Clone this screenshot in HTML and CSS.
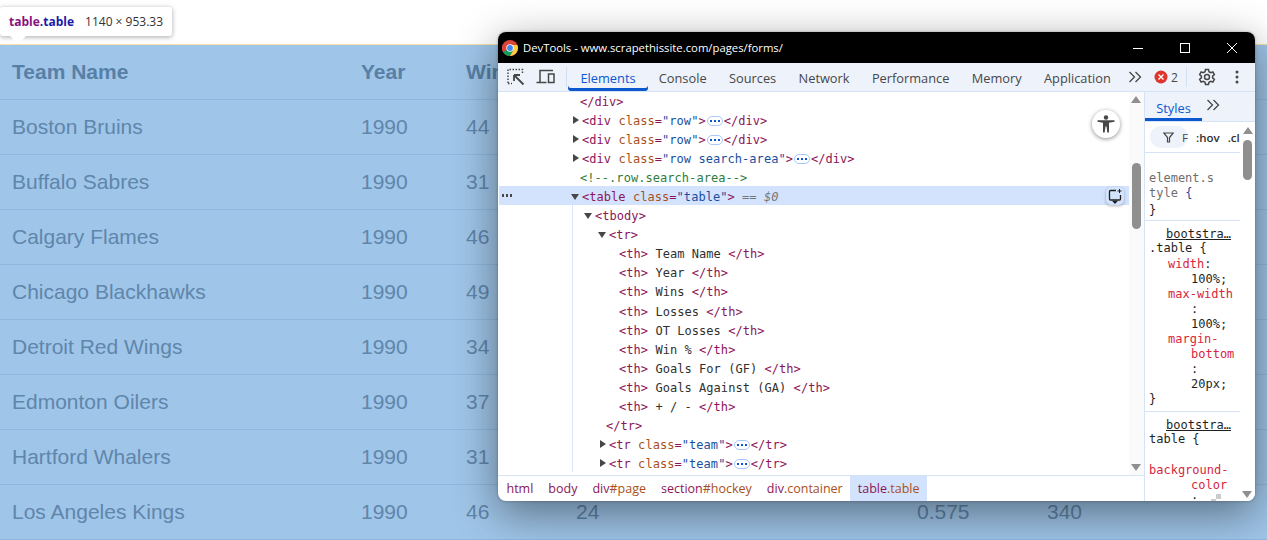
FILE: index.html
```html
<!DOCTYPE html>
<html lang="en">
<head>
    <meta charset="UTF-8">
    <title>DevTools - www.scrapethissite.com/pages/forms/</title>
    <link rel="stylesheet" href="styles.css">
</head>
<body>
    <div class="page-top"></div>
    <table class="teams">
        <colgroup>
            <col class="c-name"><col class="c-year"><col class="c-wins"><col class="c-losses"><col class="c-ot"><col class="c-pct"><col class="c-gf">
        </colgroup>
        <tr><th>Team Name</th><th>Year</th><th>Wins</th><th></th><th></th><th></th><th></th></tr>
        <tr><td>Boston Bruins</td><td>1990</td><td>44</td><td></td><td></td><td></td><td></td></tr>
        <tr><td>Buffalo Sabres</td><td>1990</td><td>31</td><td></td><td></td><td></td><td></td></tr>
        <tr><td>Calgary Flames</td><td>1990</td><td>46</td><td></td><td></td><td></td><td></td></tr>
        <tr><td>Chicago Blackhawks</td><td>1990</td><td>49</td><td></td><td></td><td></td><td></td></tr>
        <tr><td>Detroit Red Wings</td><td>1990</td><td>34</td><td></td><td></td><td></td><td></td></tr>
        <tr><td>Edmonton Oilers</td><td>1990</td><td>37</td><td></td><td></td><td></td><td></td></tr>
        <tr><td>Hartford Whalers</td><td>1990</td><td>31</td><td></td><td></td><td></td><td></td></tr>
        <tr><td>Los Angeles Kings</td><td>1990</td><td>46</td><td>24</td><td></td><td>0.575</td><td>340</td></tr>
    </table>

    <div class="tip">
        <span class="tip-name"><span class="tip-tag">table</span>.table</span>
        <span class="tip-size">1140 × 953.33</span>
    </div>

    <div class="devtools">
        <div class="titlebar">
            <svg class="chrome-logo" width="16" height="16" viewBox="0 0 16 16">
                <circle cx="8" cy="8" r="8" fill="#db4437"/>
                <path d="M8 8 L1.07 12 A8 8 0 0 1 1.07 4 L4 4 Z" fill="#db4437"/>
                <path d="M8 8 L1.07 12 A8 8 0 0 0 8 16 L11.5 10 Z" fill="#0f9d58"/>
                <path d="M8 8 L11.5 10 L8 16 A8 8 0 0 0 15.4 5 L8 5 Z" fill="#ffcd40"/>
                <circle cx="8" cy="8" r="3.7" fill="#fff"/>
                <circle cx="8" cy="8" r="2.9" fill="#4285f4"/>
            </svg>
            <span class="title-text">DevTools - www.scrapethissite.com/pages/forms/</span>
            <div class="win-buttons">
                <svg width="12" height="12" viewBox="0 0 12 12"><path d="M1 6.5h10" stroke="#fff"/></svg>
                <svg width="12" height="12" viewBox="0 0 12 12"><rect x="1.5" y="1.5" width="9" height="9" fill="none" stroke="#fff"/></svg>
                <svg width="12" height="12" viewBox="0 0 12 12"><path d="M1 1l10 10M11 1L1 11" stroke="#fff"/></svg>
            </div>
        </div>

        <div class="toolbar">
            <svg class="tool-inspect" width="18" height="18" viewBox="0 0 18 18" fill="none" stroke="#474747">
                <path d="M1 15V1.500H15.500V5M1 15.500H5" stroke-width="1.500" stroke-dasharray="1.500 1.500"/>
                <path d="M7 7L16.500 16.500M7 7h6M7 7v6" stroke-width="1.800"/>
            </svg>
            <svg class="tool-device" width="20" height="16" viewBox="0 0 20 16" fill="none" stroke="#474747" stroke-width="1.500">
                <path d="M4 13V1.500H17M0.500 13.500h10"/>
                <rect x="12.500" y="5" width="5.500" height="8.500"/>
            </svg>
            <span class="tool-sep"></span>
            <div class="tabs">
                <span class="tab tab-active">Elements</span>
                <span class="tab">Console</span>
                <span class="tab">Sources</span>
                <span class="tab">Network</span>
                <span class="tab">Performance</span>
                <span class="tab">Memory</span>
                <span class="tab">Application</span>
            </div>
            <svg class="more-tabs" width="14" height="12" viewBox="0 0 14 12" fill="none" stroke="#474747" stroke-width="1.3"><path d="M1.500 1l5 5-5 5M7.500 1l5 5-5 5"/></svg>
            <svg class="err-icon" width="14" height="14" viewBox="0 0 14 14"><circle cx="7" cy="7" r="6.500" fill="#dc362e"/><path d="M4.500 4.500l5 5M9.500 4.500l-5 5" stroke="#fff" stroke-width="1.300"/></svg>
            <span class="err-count">2</span>
            <span class="tool-sep sep-right"></span>
            <svg class="gear" width="18" height="18" viewBox="0 0 24 24" fill="none" stroke="#474747" stroke-width="2">
                <path d="M10 2h4l.6 3 2.300 1.300 2.900-1 2 3.500-2.300 2v2.400l2.300 2-2 3.500-2.900-1-2.300 1.300-.6 3h-4l-.6-3-2.300-1.300-2.900 1-2-3.500 2.300-2v-2.400l-2.300-2 2-3.500 2.900 1L9.400 5z"/>
                <circle cx="12" cy="12" r="3.300"/>
            </svg>
            <svg class="kebab" width="4" height="14" viewBox="0 0 4 14" fill="#474747"><circle cx="2" cy="2" r="1.500"/><circle cx="2" cy="7" r="1.500"/><circle cx="2" cy="12" r="1.500"/></svg>
        </div>

        <div class="panels">
            <div class="elements">
                <div class="tree-wrap">
                    <div class="tree">
                        <div class="line d-close"><span class="tg">&lt;/div&gt;</span></div>
                        <div class="line d-0"><i class="arrow"></i><span class="tg">&lt;div</span> <span class="at">class</span><span class="tg">=</span><span class="vl">"row"</span><span class="tg">&gt;</span><span class="dots"></span><span class="tg">&lt;/div&gt;</span></div>
                        <div class="line d-0"><i class="arrow"></i><span class="tg">&lt;div</span> <span class="at">class</span><span class="tg">=</span><span class="vl">"row"</span><span class="tg">&gt;</span><span class="dots"></span><span class="tg">&lt;/div&gt;</span></div>
                        <div class="line d-0"><i class="arrow"></i><span class="tg">&lt;div</span> <span class="at">class</span><span class="tg">=</span><span class="vl">"row search-area"</span><span class="tg">&gt;</span><span class="dots"></span><span class="tg">&lt;/div&gt;</span></div>
                        <div class="line d-close cm">&lt;!--.row.search-area--&gt;</div>
                        <div class="line d-0 selected"><span class="gutter-dots"></span><i class="arrow open"></i><span class="tg">&lt;table</span> <span class="at">class</span><span class="tg">=</span><span class="vl">"table"</span><span class="tg">&gt;</span> <em class="eq">== $0</em></div>
                        <div class="children">
                            <div class="line d-1"><i class="arrow open"></i><span class="tg">&lt;tbody&gt;</span></div>
                            <div class="line d-2"><i class="arrow open"></i><span class="tg">&lt;tr&gt;</span></div>
                            <div class="line d-3"><span class="tg">&lt;th&gt;</span> Team Name <span class="tg">&lt;/th&gt;</span></div>
                            <div class="line d-3"><span class="tg">&lt;th&gt;</span> Year <span class="tg">&lt;/th&gt;</span></div>
                            <div class="line d-3"><span class="tg">&lt;th&gt;</span> Wins <span class="tg">&lt;/th&gt;</span></div>
                            <div class="line d-3"><span class="tg">&lt;th&gt;</span> Losses <span class="tg">&lt;/th&gt;</span></div>
                            <div class="line d-3"><span class="tg">&lt;th&gt;</span> OT Losses <span class="tg">&lt;/th&gt;</span></div>
                            <div class="line d-3"><span class="tg">&lt;th&gt;</span> Win % <span class="tg">&lt;/th&gt;</span></div>
                            <div class="line d-3"><span class="tg">&lt;th&gt;</span> Goals For (GF) <span class="tg">&lt;/th&gt;</span></div>
                            <div class="line d-3"><span class="tg">&lt;th&gt;</span> Goals Against (GA) <span class="tg">&lt;/th&gt;</span></div>
                            <div class="line d-3"><span class="tg">&lt;th&gt;</span> + / - <span class="tg">&lt;/th&gt;</span></div>
                            <div class="line d-2-close"><span class="tg">&lt;/tr&gt;</span></div>
                            <div class="line d-2"><i class="arrow"></i><span class="tg">&lt;tr</span> <span class="at">class</span><span class="tg">=</span><span class="vl">"team"</span><span class="tg">&gt;</span><span class="dots"></span><span class="tg">&lt;/tr&gt;</span></div>
                            <div class="line d-2"><i class="arrow"></i><span class="tg">&lt;tr</span> <span class="at">class</span><span class="tg">=</span><span class="vl">"team"</span><span class="tg">&gt;</span><span class="dots"></span><span class="tg">&lt;/tr&gt;</span></div>
                        </div>
                    </div>
                    <div class="scroll scroll-tree">
                        <i class="sc-up"></i>
                        <i class="sc-thumb"></i>
                        <i class="sc-down"></i>
                    </div>
                    <div class="a11y-btn">
                        <svg width="20" height="20" viewBox="0 0 20 20" fill="#474747">
                            <circle cx="10" cy="3.500" r="2.200"/>
                            <path d="M1.500 6.300h17v1.400l-5.500 1V18.500h-1.700l-.8-6h-1l-.8 6H7V8.700l-5.500-1z"/>
                        </svg>
                    </div>
                    <div class="ai-btn">
                        <svg width="16" height="16" viewBox="0 0 16 16" fill="none" stroke="#1f1f1f" stroke-width="1.300">
                            <path d="M9 2.500H3.500a1 1 0 0 0-1 1v7.500a1 1 0 0 0 1 1h9a1 1 0 0 0 1-1V7"/>
                            <path d="M6.500 13.500h3L8 15z" fill="#1f1f1f"/>
                            <path d="M12.500 1v4M10.500 3h4" stroke-width="1"/>
                        </svg>
                    </div>
                </div>
                <div class="crumbs">
                    <span class="crumb"><span class="tg">html</span></span>
                    <span class="crumb"><span class="tg">body</span></span>
                    <span class="crumb"><span class="tg">div</span><span class="at">#page</span></span>
                    <span class="crumb"><span class="tg">section</span><span class="at">#hockey</span></span>
                    <span class="crumb"><span class="tg">div</span><span class="at">.container</span></span>
                    <span class="crumb crumb-on"><span class="tg">table</span><span class="at">.table</span></span>
                </div>
            </div>

            <div class="sidebar">
                <div class="side-tabs">
                    <span class="side-tab">Styles</span>
                    <svg class="side-more" width="14" height="12" viewBox="0 0 14 12" fill="none" stroke="#474747" stroke-width="1.300"><path d="M1.500 1l5 5-5 5M7.500 1l5 5-5 5"/></svg>
                </div>
                <div class="filter-row">
                    <div class="filter-pill">
                        <svg width="11" height="11" viewBox="0 0 11 11" fill="none" stroke="#474747" stroke-width="1.200"><path d="M.8 1h9.400L6.500 5.500V10h-2V5.500z"/></svg>
                        <span>F</span>
                    </div>
                    <span class="filter-btn">:hov</span>
                    <span class="filter-btn">.cl</span>
                </div>
                <div class="rules">
                    <div class="rule rule-first">
                        <div class="sl sel-gray">element.s</div>
                        <div class="sl sel-gray">tyle <span class="brace">{</span></div>
                        <div class="sl end-first">}</div>
                    </div>
                    <div class="rule">
                        <div class="sl src"><u>bootstra…</u></div>
                        <div class="sl sel">.table {</div>
                        <div class="sl in1"><span class="prop">width</span>:</div>
                        <div class="sl in2">100%;</div>
                        <div class="sl in1"><span class="prop">max-width</span></div>
                        <div class="sl in2">:</div>
                        <div class="sl in2">100%;</div>
                        <div class="sl in1"><span class="prop">margin-</span></div>
                        <div class="sl in2"><span class="prop">bottom</span></div>
                        <div class="sl in2">:</div>
                        <div class="sl in2">20px;</div>
                        <div class="sl">}</div>
                    </div>
                    <div class="rule">
                        <div class="sl src"><u>bootstra…</u></div>
                        <div class="sl sel">table {</div>
                        <div class="sl">&nbsp;</div>
                        <div class="sl"><span class="prop">background-</span></div>
                        <div class="sl in2"><span class="prop">color</span></div>
                        <div class="sl in2">: <i class="swatch"></i></div>
                    </div>
                </div>
                <div class="scroll scroll-side">
                    <i class="sc-up"></i>
                    <i class="sc-thumb"></i>
                    <i class="sc-down"></i>
                </div>
            </div>
        </div>
    </div>
</body>
</html>
```

FILE: styles.css
```css
html, body {
    margin: 0;
    padding: 0;
    height: 540px;
    overflow: hidden;
    background: #fff;
}

body {
    position: relative;
    font-family: "Liberation Sans", Arial, sans-serif;
}

/* page underneath, with the inspect overlay colour */
.page-top {
    height: 44px;
    border-bottom: 1px solid #f6dfa8;
    background: #fff;
}

.teams {
    width: 1267px;
    table-layout: fixed;
    border-collapse: collapse;
    background: #9fc5e8;
    color: #5f86ab;
    font-size: 21px;
}

.c-name { width: 349px; }
.c-year { width: 105px; }
.c-wins { width: 110px; }
.c-losses { width: 135px; }
.c-ot { width: 206px; }
.c-pct { width: 130px; }

.teams th, .teams td {
    height: 54px;
    padding: 0 10px 0 12px;
    box-sizing: content-box;
    border-bottom: 1px solid #8fb8df;
    text-align: left;
    white-space: nowrap;
}

.teams th {
    color: #5880a6;
    font-weight: bold;
}

/* element tooltip */
.tip {
    position: absolute;
    left: 0;
    top: 7px;
    width: 172px;
    height: 29px;
    display: flex;
    align-items: center;
    gap: 11px;
    padding-left: 9px;
    box-sizing: border-box;
    background: #fff;
    border-radius: 3px;
    box-shadow: 0 1px 5px rgba(0, 0, 0, 0.35);
    font-family: "Open Sans", sans-serif;
    font-size: 12px;
}

.tip::after {
    content: "";
    position: absolute;
    left: 10px;
    top: 29px;
    border-left: 8px solid transparent;
    border-right: 8px solid transparent;
    border-top: 8px solid #fff;
}

.tip-name {
    color: #1a1aa6;
    font-weight: bold;
}

.tip-tag {
    color: #881280;
}

.tip-size {
    color: #333;
}

/* devtools window */
.devtools {
    position: absolute;
    left: 498px;
    top: 32px;
    width: 757px;
    height: 469px;
    display: flex;
    flex-direction: column;
    background: #fff;
    border-radius: 8px;
    overflow: hidden;
    box-shadow: 0 12px 44px rgba(0, 0, 0, 0.45), 0 0 3px rgba(0, 0, 0, 0.3);
    font-family: "Open Sans", sans-serif;
}

.titlebar {
    height: 31px;
    flex: none;
    display: flex;
    align-items: center;
    background: #000;
    color: #fff;
    padding-left: 4px;
}

.chrome-logo {
    margin-right: 5px;
}

.title-text {
    font-size: 11.300px;
}

.win-buttons {
    margin-left: auto;
    display: flex;
    gap: 35px;
    padding-right: 17px;
}

.toolbar {
    height: 29px;
    box-sizing: border-box;
    flex: none;
    display: flex;
    align-items: center;
    background: #edf2fb;
    border-bottom: 1px solid #d6e2f5;
}

.tool-inspect {
    margin-left: 9px;
}

.tool-device {
    margin-left: 11px;
}

.tool-sep {
    width: 1px;
    height: 20px;
    margin-left: 10px;
    background: #d3e0f2;
}

.tabs {
    display: flex;
    flex: none;
    width: 556px;
    margin-left: 1px;
    height: 28px;
}

.tab {
    padding: 0 11.200px;
    line-height: 30px;
    font-size: 12.800px;
    color: #474747;
    white-space: nowrap;
}

.tab-active {
    padding: 0 12px 0 12.500px;
    color: #0b57d0;
    box-shadow: inset 0 -3px 0 #0b57d0;
    border-radius: 0 0 3px 3px;
}

.more-tabs {
    margin-left: 4px;
}

.err-icon {
    margin-left: 12px;
}

.err-count {
    margin-left: 3px;
    font-size: 12px;
    color: #474747;
}

.sep-right {
    margin-left: 8px;
}

.gear {
    margin-left: 11px;
}

.kebab {
    margin-left: 19px;
}

.panels {
    flex: 1;
    display: flex;
    min-height: 0;
}

.elements {
    width: 646px;
    flex: none;
    display: flex;
    flex-direction: column;
}

.tree-wrap {
    flex: 1;
    position: relative;
    display: flex;
    min-height: 0;
    overflow: hidden;
}

.tree {
    flex: 1;
    margin-top: -1px;
    font-family: "DejaVu Sans Mono", monospace;
    font-size: 12px;
    letter-spacing: 0.050px;
    color: #303030;
}

.line {
    height: 19.050px;
    box-sizing: border-box;
    padding-top: 2px;
    line-height: 19px;
    white-space: pre;
}

.tg { color: #8c1558; }
.at { color: #a8501c; }
.vl { color: #1a4f9f; }
.cm { color: #2f7d3a; }

.d-close { padding-left: 82px; }
.d-0 { padding-left: 84px; }
.children {
    margin-left: 74px;
    border-left: 1px solid #dbe6f8;
}
.d-1 { padding-left: 22px; }
.d-2 { padding-left: 36px; }
.d-3 { padding-left: 46px; }
.d-2-close { padding-left: 33px; }

.selected {
    position: relative;
    background: #d3e3fd;
    margin-left: 1px;
    padding-left: 83px;
}

.eq {
    color: #767676;
}

.gutter-dots {
    position: absolute;
    left: 2px;
    top: 8px;
    width: 12px;
    height: 3px;
    background: radial-gradient(circle, #474747 1.200px, transparent 1.500px) 0 0 / 4px 3px repeat-x;
}

.arrow {
    display: inline-block;
    position: relative;
}

.arrow::before {
    content: "";
    position: absolute;
    left: -9px;
    top: -9px;
    border-top: 4px solid transparent;
    border-bottom: 4px solid transparent;
    border-left: 6px solid #474747;
}

.arrow.open::before {
    left: -11px;
    top: -7px;
    border-left: 4.500px solid transparent;
    border-right: 4.500px solid transparent;
    border-top: 6px solid #474747;
    border-bottom: 0;
}

.dots {
    display: inline-block;
    width: 14px;
    height: 8px;
    margin: 0 1px;
    border: 1px solid #a8c7fa;
    border-radius: 5px;
    background: radial-gradient(circle, #0b57d0 1px, transparent 1.300px) 1px 0 / 4px 8px repeat-x #fff;
    background-clip: padding-box;
    vertical-align: -1px;
}

/* scrollbars */
.scroll {
    flex: none;
    position: relative;
    width: 15px;
}

.scroll-tree {
    background: #fafafa;
}

.sc-up, .sc-down {
    position: absolute;
    left: 2px;
    border-left: 5px solid transparent;
    border-right: 5px solid transparent;
}

.sc-up {
    top: 4px;
    border-bottom: 7px solid #8f8f8f;
}

.sc-down {
    bottom: 4px;
    border-top: 7px solid #8f8f8f;
}

.sc-thumb {
    position: absolute;
    left: 3px;
    top: 71px;
    width: 9px;
    height: 66px;
    border-radius: 5px;
    background: #8f8f8f;
}

.a11y-btn {
    position: absolute;
    left: 594px;
    top: 18px;
    width: 28px;
    height: 28px;
    display: flex;
    align-items: center;
    justify-content: center;
    background: #fff;
    border-radius: 50%;
    box-shadow: 0 1px 4px rgba(0, 0, 0, 0.45);
}

.ai-btn {
    position: absolute;
    left: 608px;
    top: 95px;
    width: 18px;
    height: 18px;
    display: flex;
    align-items: center;
    justify-content: center;
    background: #d3e3fd;
    border-radius: 5px;
    box-shadow: 0 1px 3px rgba(0, 0, 0, 0.3);
}

.crumbs {
    height: 25px;
    flex: none;
    display: flex;
    border-top: 1px solid #d6e2f5;
    padding-left: 1px;
    font-size: 12.500px;
    line-height: 26px;
}

.crumb {
    padding: 0 7.500px;
}

.crumb-on {
    background: #d3e3fd;
}

/* styles sidebar */
.sidebar {
    flex: 1;
    min-width: 0;
    position: relative;
    display: flex;
    flex-direction: column;
    border-left: 1px solid #d6e2f5;
}

.side-tabs {
    height: 29px;
    flex: none;
    display: flex;
    align-items: center;
    background: #edf2fb;
    border-bottom: 1px solid #d6e2f5;
}

.side-tab {
    width: 57px;
    height: 29px;
    box-sizing: border-box;
    line-height: 32px;
    text-align: center;
    font-size: 12.800px;
    color: #0b57d0;
    box-shadow: inset 0 -3px 0 #0b57d0;
}

.side-more {
    margin-left: 4px;
    margin-top: -3px;
}

.filter-row {
    height: 30px;
    flex: none;
    display: flex;
    align-items: center;
    gap: 8px;
    padding-left: 5px;
    border-bottom: 1px solid #d6e2f5;
    font-size: 11.500px;
    overflow: hidden;
}

.filter-pill {
    width: 38px;
    height: 22px;
    flex: none;
    display: flex;
    align-items: center;
    gap: 8px;
    padding-left: 13px;
    box-sizing: border-box;
    background: #edf2fb;
    border-radius: 11px;
    color: #474747;
}

.filter-btn {
    font-weight: 600;
    color: #303030;
    white-space: nowrap;
}

.rules {
    flex: 1;
    min-height: 0;
    overflow: hidden;
    font-family: "DejaVu Sans Mono", monospace;
    font-size: 12px;
    color: #1f1f1f;
}

.rule {
    width: 96px;
    padding: 6px 0 4px 4px;
    border-bottom: 1px solid #d6e2f5;
}

.rule-first {
    padding-top: 18px;
    padding-bottom: 2px;
}

.sl {
    height: 15px;
    line-height: 15px;
    white-space: pre;
}

.end-first { margin-top: 2px; }
.sel { margin-top: -1px; margin-bottom: 1px; }
.sel-gray { color: #6e6e6e; }
.brace { color: #1a4f9f; }
.src { padding-left: 17px; }
.in1 { padding-left: 19px; }
.in2 { padding-left: 42px; }
.prop { color: #d7263d; }

.swatch {
    display: inline-block;
    width: 10px;
    height: 10px;
    margin-left: 6px;
    background: conic-gradient(#ccc 25%, #fff 0 50%, #ccc 0 75%, #fff 0);
}

.scroll-side {
    position: absolute;
    right: 0;
    top: 30px;
    bottom: 0;
    width: 15px;
    background: #fff;
}

.scroll-side .sc-up { left: 3px; top: 5px; }
.scroll-side .sc-thumb { left: 3px; top: 18px; height: 40px; }
.scroll-side .sc-down { left: 2px; bottom: 3px; }
```
